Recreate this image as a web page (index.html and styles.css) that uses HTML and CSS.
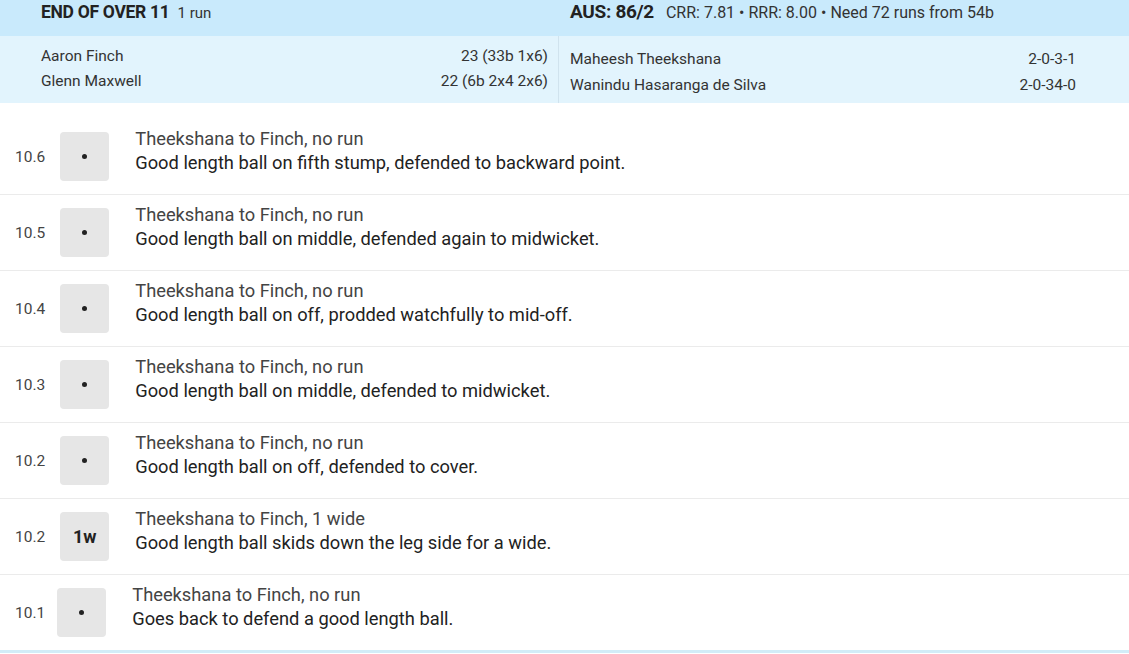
FILE: index.html
```html
<!DOCTYPE html>
<html lang="en">
<head>
    <meta charset="UTF-8">
    <title>Commentary</title>
    <link rel="stylesheet" href="styles.css">
</head>
<body>
    <div class="over-summary">
        <div class="over-head">
            <div class="over-head-col">
                <span class="over-title">END OF OVER 11</span>
                <span class="over-runs">1 run</span>
            </div>
            <div class="over-head-col right">
                <span class="over-title score">AUS: 86/2</span>
                <span class="over-runs rates">CRR: 7.81 &bull; RRR: 8.00 &bull; Need 72 runs from 54b</span>
            </div>
        </div>
        <div class="over-body">
            <div class="players">
                <div class="player"><span>Aaron Finch</span><span>23 (33b 1x6)</span></div>
                <div class="player"><span>Glenn Maxwell</span><span>22 (6b 2x4 2x6)</span></div>
            </div>
            <div class="players bowlers">
                <div class="player"><span>Maheesh Theekshana</span><span>2-0-3-1</span></div>
                <div class="player"><span>Wanindu Hasaranga de Silva</span><span>2-0-34-0</span></div>
            </div>
        </div>
    </div>

    <div class="balls">
        <div class="ball">
            <span class="ball-no">10.6</span>
            <span class="ball-box"><i class="dot"></i></span>
            <div class="ball-text">
                <p class="ball-who">Theekshana to Finch, no run</p>
                <p>Good length ball on fifth stump, defended to backward point.</p>
            </div>
        </div>
        <div class="ball">
            <span class="ball-no">10.5</span>
            <span class="ball-box"><i class="dot"></i></span>
            <div class="ball-text">
                <p class="ball-who">Theekshana to Finch, no run</p>
                <p>Good length ball on middle, defended again to midwicket.</p>
            </div>
        </div>
        <div class="ball">
            <span class="ball-no">10.4</span>
            <span class="ball-box"><i class="dot"></i></span>
            <div class="ball-text">
                <p class="ball-who">Theekshana to Finch, no run</p>
                <p>Good length ball on off, prodded watchfully to mid-off.</p>
            </div>
        </div>
        <div class="ball">
            <span class="ball-no">10.3</span>
            <span class="ball-box"><i class="dot"></i></span>
            <div class="ball-text">
                <p class="ball-who">Theekshana to Finch, no run</p>
                <p>Good length ball on middle, defended to midwicket.</p>
            </div>
        </div>
        <div class="ball">
            <span class="ball-no">10.2</span>
            <span class="ball-box"><i class="dot"></i></span>
            <div class="ball-text">
                <p class="ball-who">Theekshana to Finch, no run</p>
                <p>Good length ball on off, defended to cover.</p>
            </div>
        </div>
        <div class="ball">
            <span class="ball-no">10.2</span>
            <span class="ball-box extra">1w</span>
            <div class="ball-text">
                <p class="ball-who">Theekshana to Finch, 1 wide</p>
                <p>Good length ball skids down the leg side for a wide.</p>
            </div>
        </div>
        <div class="ball">
            <span class="ball-no narrow">10.1</span>
            <span class="ball-box"><i class="dot"></i></span>
            <div class="ball-text">
                <p class="ball-who">Theekshana to Finch, no run</p>
                <p>Goes back to defend a good length ball.</p>
            </div>
        </div>
    </div>
</body>
</html>
```

FILE: styles.css
```css
body {
    font-family: Roboto, 'Liberation Sans', sans-serif;
    margin: 0;
    padding: 0;
    background: #fff;
    color: #222;
    overflow: hidden;
}
.over-summary {
    background: #e2f4fd;
}
.over-head {
    display: flex;
    height: 36px;
    background: #c9eafc;
}
.over-head-col {
    width: 559px;
    padding: 2px 0 0 41px;
    box-sizing: border-box;
    line-height: 20px;
    white-space: nowrap;
}
.over-head-col.right {
    width: 570px;
    padding-left: 11px;
}
.over-title {
    font-size: 17.5px;
    font-weight: bold;
    color: #222;
    letter-spacing: -0.3px;
    margin-right: 4px;
}
.over-title.score {
    font-size: 19px;
    margin-right: 8px;
}
.over-runs {
    font-size: 15px;
    color: #333;
}
.over-runs.rates {
    font-size: 16px;
}
.over-body {
    display: flex;
    height: 67px;
}
.players {
    width: 559px;
    box-sizing: border-box;
    padding: 8px 10px 0 41px;
    border-right: 1px solid #d0e3ee;
    font-size: 15.5px;
    color: #333;
}
.players.bowlers {
    width: 570px;
    padding: 10px 53px 0 11px;
    border-right: none;
}
.player {
    display: flex;
    justify-content: space-between;
    line-height: 25px;
}
.bowlers .player {
    line-height: 26px;
}
.balls {
    margin-top: 16px;
    border-bottom: 3px solid #d2ecf7;
}
.ball {
    display: flex;
    align-items: center;
    height: 75px;
    border-bottom: 1px solid #ebebeb;
}
.ball:last-child {
    border-bottom: none;
}
.ball-no {
    font-size: 15.5px;
    color: #444;
    margin: 0 15px;
}
.ball-no.narrow {
    margin-right: 12px;
}
.ball-box {
    display: flex;
    align-items: center;
    justify-content: center;
    width: 49px;
    height: 49px;
    border-radius: 4px;
    background: #e6e6e6;
    color: #222;
    margin-right: 26px;
}
.ball-box.extra {
    font-size: 18px;
    font-weight: bold;
}
.dot {
    width: 5px;
    height: 5px;
    border-radius: 50%;
    background: #222;
}
.ball-text {
    margin-bottom: 12px;
}
.ball-text p {
    margin: 0;
    font-size: 18.3px;
    line-height: 24px;
    color: #222;
}
.ball-text .ball-who {
    color: #444;
}
```
